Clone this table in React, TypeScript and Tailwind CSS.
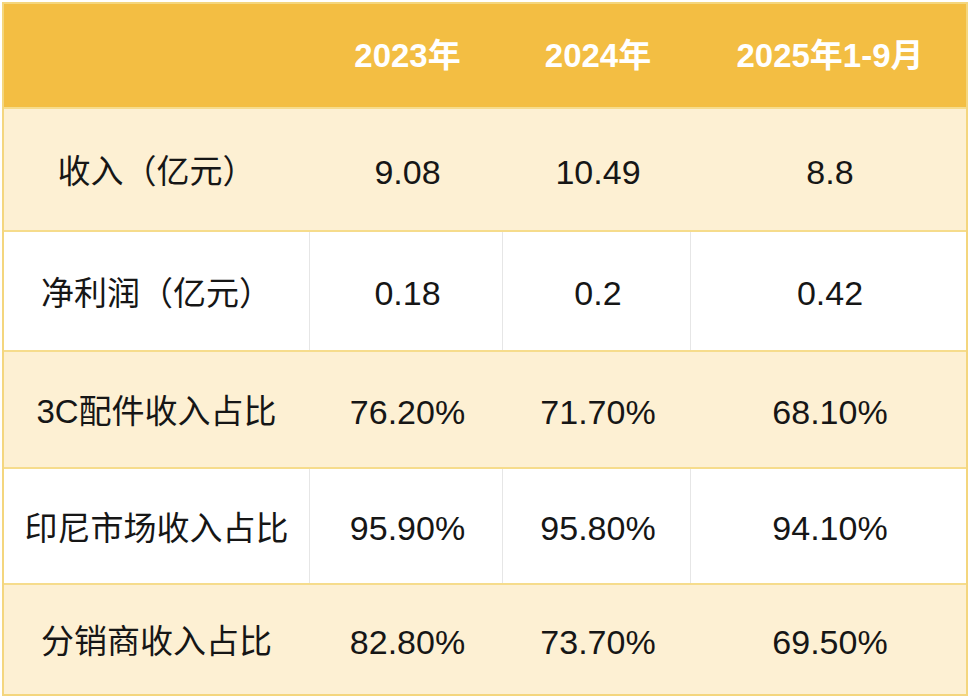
const columns = ["", "2023年", "2024年", "2025年1-9月"];

interface Row {
  label: string;
  values: string[];
  height: string;
  tinted: boolean;
}

const rows: Row[] = [
  { label: "收入（亿元）", values: ["9.08", "10.49", "8.8"], height: "h-[123px]", tinted: true },
  { label: "净利润（亿元）", values: ["0.18", "0.2", "0.42"], height: "h-[120px]", tinted: false },
  { label: "3C配件收入占比", values: ["76.20%", "71.70%", "68.10%"], height: "h-[117px]", tinted: true },
  { label: "印尼市场收入占比", values: ["95.90%", "95.80%", "94.10%"], height: "h-[116px]", tinted: false },
  { label: "分销商收入占比", values: ["82.80%", "73.70%", "69.50%"], height: "h-[111px]", tinted: true },
];

const widths = ["w-[305px]", "w-[193px]", "w-[188px]", "w-[276px]"];

export default function App() {
  return (
    <div className="w-[974px] h-[698px] bg-white pt-[2px] pl-[2px] font-['Liberation_Sans','Noto_Sans_CJK_SC',sans-serif]">
      <div className="w-[966px] border-2 border-[#f4d67e] flex flex-col">
        <div className="flex h-[103px] bg-[#f3be43]">
          {columns.map((c, i) => (
            <div
              key={i}
              className={`${widths[i]} flex items-center justify-center text-white font-bold text-[33px] pl-[4px]`}
            >
              {c}
            </div>
          ))}
        </div>
        {rows.map((r) => (
          <div
            key={r.label}
            className={`flex ${r.height} border-t-2 border-[#f6dc8c] ${r.tinted ? "bg-[#fdf0d3]" : "bg-white"}`}
          >
            {[r.label, ...r.values].map((v, i) => (
              <div
                key={i}
                className={`${widths[i]} flex items-center justify-center pt-[5px] text-[#161616] ${
                  i > 0 ? "text-[34px] pl-[3px]" : "text-[33px]"
                } ${i > 0 ? (r.tinted ? "border-l border-[#fdf0d3]" : "border-l border-[#e6e6e6]") : ""}`}
              >
                {v}
              </div>
            ))}
          </div>
        ))}
      </div>
    </div>
  );
}
